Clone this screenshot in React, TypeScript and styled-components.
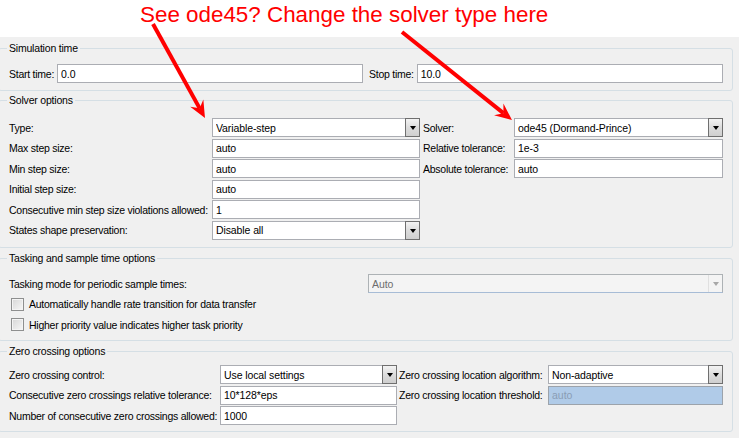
import React from "react";
import styled, { createGlobalStyle } from "styled-components";

const Global = createGlobalStyle`
  html, body { margin: 0; padding: 0; background: #ffffff; }
  body {
    font-family: "Liberation Sans", Arial, sans-serif;
    font-size: 10.5px;
    color: #000000;
  }
  * { box-sizing: border-box; }
`;

const Page = styled.div`
  position: relative;
  width: 739px;
  height: 438px;
  overflow: hidden;
  display: flex;
  flex-direction: column;
  background: #ffffff;
`;

const Header = styled.div`
  flex: none;
  height: 37px;
  padding: 2px 0 0 140px;
  color: #ff0000;
  font-family: "Liberation Sans", Arial, sans-serif;
  font-size: 22.4px;
  line-height: 26px;
  white-space: nowrap;
`;

const Panel = styled.div`
  flex: 1;
  background: #f0f0f0;
  padding: 4px 6px 0 0;
  overflow: hidden;
`;

const Group = styled.fieldset<{ $mt: number; $pt: number; $pb: number }>`
  margin: ${(p) => p.$mt}px 0 0 -2px;
  padding: ${(p) => p.$pt}px 9px ${(p) => p.$pb}px 10px;
  border: 1px solid #d5dfe5;
  border-radius: 3px;
  min-width: 0;
`;

const Legend = styled.legend`
  margin-left: -2px;
  padding: 0 2px;
  line-height: 14px;
  font-size: 10.5px;
  letter-spacing: -0.2px;
  color: #000;
`;

const Grid = styled.div<{ $cols: string; $colGap?: number }>`
  display: grid;
  grid-template-columns: ${(p) => p.$cols};
  column-gap: ${(p) => p.$colGap ?? 0}px;
  grid-auto-rows: 19px;
  row-gap: 1.5px;
  align-items: center;
`;

const Half = styled.div`
  display: flex;
  align-items: center;
  gap: 3px;
  min-width: 0;
`;

const Label = styled.span<{ $indent?: number }>`
  white-space: nowrap;
  padding-left: ${(p) => p.$indent ?? 0}px;
  letter-spacing: -0.25px;
`;

const TextBox = styled.div<{ $grow?: boolean }>`
  height: 19px;
  ${(p) => (p.$grow ? "flex: 1;" : "")}
  min-width: 0;
  display: flex;
  align-items: center;
  border: 1px solid #abadb3;
  background: #ffffff;
  padding: 0 0 0 3px;
  white-space: nowrap;
`;

const BoxText = styled.span`
  flex: 1;
  overflow: hidden;
  letter-spacing: -0.1px;
`;

const DropButton = styled.span`
  align-self: stretch;
  width: 15px;
  margin: -1px -1px -1px 0;
  border: 1px solid #6f6f6f;
  background: linear-gradient(#f3f3f3, #dcdcdc 50%, #cfcfcf);
  display: flex;
  align-items: center;
  justify-content: center;
  &::after {
    content: "";
    border-left: 3.5px solid transparent;
    border-right: 3.5px solid transparent;
    border-top: 4px solid #000;
    margin-top: 1px;
  }
`;

const DisabledSelect = styled.div`
  width: 355px;
  height: 19px;
  display: flex;
  align-items: center;
  border: 1px solid #adb2b5;
  border-bottom-color: #a7bcd6;
  background: #f4f4f4;
  color: #6d6d6d;
  padding-left: 3px;
`;

const DisabledArrow = styled.span`
  align-self: stretch;
  width: 14px;
  border-left: 1px solid #e0e0e0;
  display: flex;
  align-items: center;
  justify-content: center;
  &::after {
    content: "";
    border-left: 3.5px solid transparent;
    border-right: 3.5px solid transparent;
    border-top: 4px solid #a8a8a8;
  }
`;

const DisabledBox = styled.div`
  height: 19px;
  display: flex;
  align-items: center;
  border: 1px solid #9ca3ab;
  background: #b0cbe8;
  color: #8a9db5;
  padding-left: 3px;
`;

const Row = styled.div`
  height: 19px;
  display: flex;
  align-items: center;
  justify-content: space-between;
`;

const CheckRow = styled.label`
  height: 19px;
  display: flex;
  align-items: center;
  gap: 5px;
  padding-left: 2px;
`;

const Check = styled.span`
  width: 13px;
  height: 13px;
  flex: none;
  border: 1px solid #8e8f8f;
  background: linear-gradient(135deg, #d6d6d6, #f7f7f7);
  box-shadow: inset 0 0 0 1px #f4f4f4;
`;

const Stack = styled.div`
  display: flex;
  flex-direction: column;
  gap: 1.5px;
`;

const Overlay = styled.svg`
  position: absolute;
  left: 0;
  top: 0;
  pointer-events: none;
`;

function Text({ value, grow }: { value: string; grow?: boolean }) {
  return (
    <TextBox $grow={grow}>
      <BoxText>{value}</BoxText>
    </TextBox>
  );
}

function Select({ value }: { value: string }) {
  return (
    <TextBox>
      <BoxText>{value}</BoxText>
      <DropButton />
    </TextBox>
  );
}

function Arrow({ x1, y1, x2, y2 }: { x1: number; y1: number; x2: number; y2: number }) {
  const dx = x2 - x1;
  const dy = y2 - y1;
  const len = Math.hypot(dx, dy);
  const ux = dx / len;
  const uy = dy / len;
  const px = -uy;
  const py = ux;
  const head = 17;
  const half = 7.5;
  const notch = 11;
  const bx = x2 - ux * head;
  const by = y2 - uy * head;
  const nx = x2 - ux * notch;
  const ny = y2 - uy * notch;
  const pts = [
    [x2, y2],
    [bx + px * half, by + py * half],
    [nx, ny],
    [bx - px * half, by - py * half],
  ]
    .map((p) => p.join(","))
    .join(" ");
  return (
    <g>
      <line x1={x1} y1={y1} x2={nx} y2={ny} stroke="#ff0000" strokeWidth={4} />
      <polygon points={pts} fill="#ff0000" />
    </g>
  );
}

export default function App() {
  return (
    <Page>
      <Global />
      <Header>See ode45? Change the solver type here</Header>
      <Panel>
        <Group $mt={0} $pt={9} $pb={7}>
          <Legend>Simulation time</Legend>
          <Grid $cols="1fr 1fr" $colGap={6}>
            <Half>
              <Label>Start time:</Label>
              <Text value="0.0" grow />
            </Half>
            <Half>
              <Label>Stop time:</Label>
              <Text value="10.0" grow />
            </Half>
          </Grid>
        </Group>

        <Group $mt={2} $pt={11} $pb={7}>
          <Legend>Solver options</Legend>
          <Grid $cols="203px 208px 94px 209px">
            <Label>Type:</Label>
            <Select value="Variable-step" />
            <Label $indent={3}>Solver:</Label>
            <Select value="ode45 (Dormand-Prince)" />

            <Label>Max step size:</Label>
            <Text value="auto" />
            <Label $indent={3}>Relative tolerance:</Label>
            <Text value="1e-3" />

            <Label>Min step size:</Label>
            <Text value="auto" />
            <Label $indent={3}>Absolute tolerance:</Label>
            <Text value="auto" />

            <Label>Initial step size:</Label>
            <Text value="auto" />
            <span />
            <span />

            <Label>Consecutive min step size violations allowed:</Label>
            <Text value="1" />
            <span />
            <span />

            <Label>States shape preservation:</Label>
            <Select value="Disable all" />
            <span />
            <span />
          </Grid>
        </Group>

        <Group $mt={3.5} $pt={9} $pb={6}>
          <Legend>Tasking and sample time options</Legend>
          <Stack>
            <Row>
              <Label>Tasking mode for periodic sample times:</Label>
              <DisabledSelect>
                <BoxText>Auto</BoxText>
                <DisabledArrow />
              </DisabledSelect>
            </Row>
            <CheckRow>
              <Check />
              <Label>Automatically handle rate transition for data transfer</Label>
            </CheckRow>
            <CheckRow>
              <Check />
              <Label>Higher priority value indicates higher task priority</Label>
            </CheckRow>
          </Stack>
        </Group>

        <Group $mt={3} $pt={7} $pb={6}>
          <Legend>Zero crossing options</Legend>
          <Grid $cols="211px 177px 151px 175px">
            <Label>Zero crossing control:</Label>
            <Select value="Use local settings" />
            <Label $indent={2}>Zero crossing location algorithm:</Label>
            <Select value="Non-adaptive" />

            <Label>Consecutive zero crossings relative tolerance:</Label>
            <Text value="10*128*eps" />
            <Label $indent={2}>Zero crossing location threshold:</Label>
            <DisabledBox>auto</DisabledBox>

            <Label>Number of consecutive zero crossings allowed:</Label>
            <Text value="1000" />
            <span />
            <span />
          </Grid>
        </Group>
      </Panel>
      <Overlay width={739} height={438} viewBox="0 0 739 438">
        <Arrow x1={153} y1={24} x2={205} y2={118} />
        <Arrow x1={402} y1={32} x2={512} y2={120} />
      </Overlay>
    </Page>
  );
}
